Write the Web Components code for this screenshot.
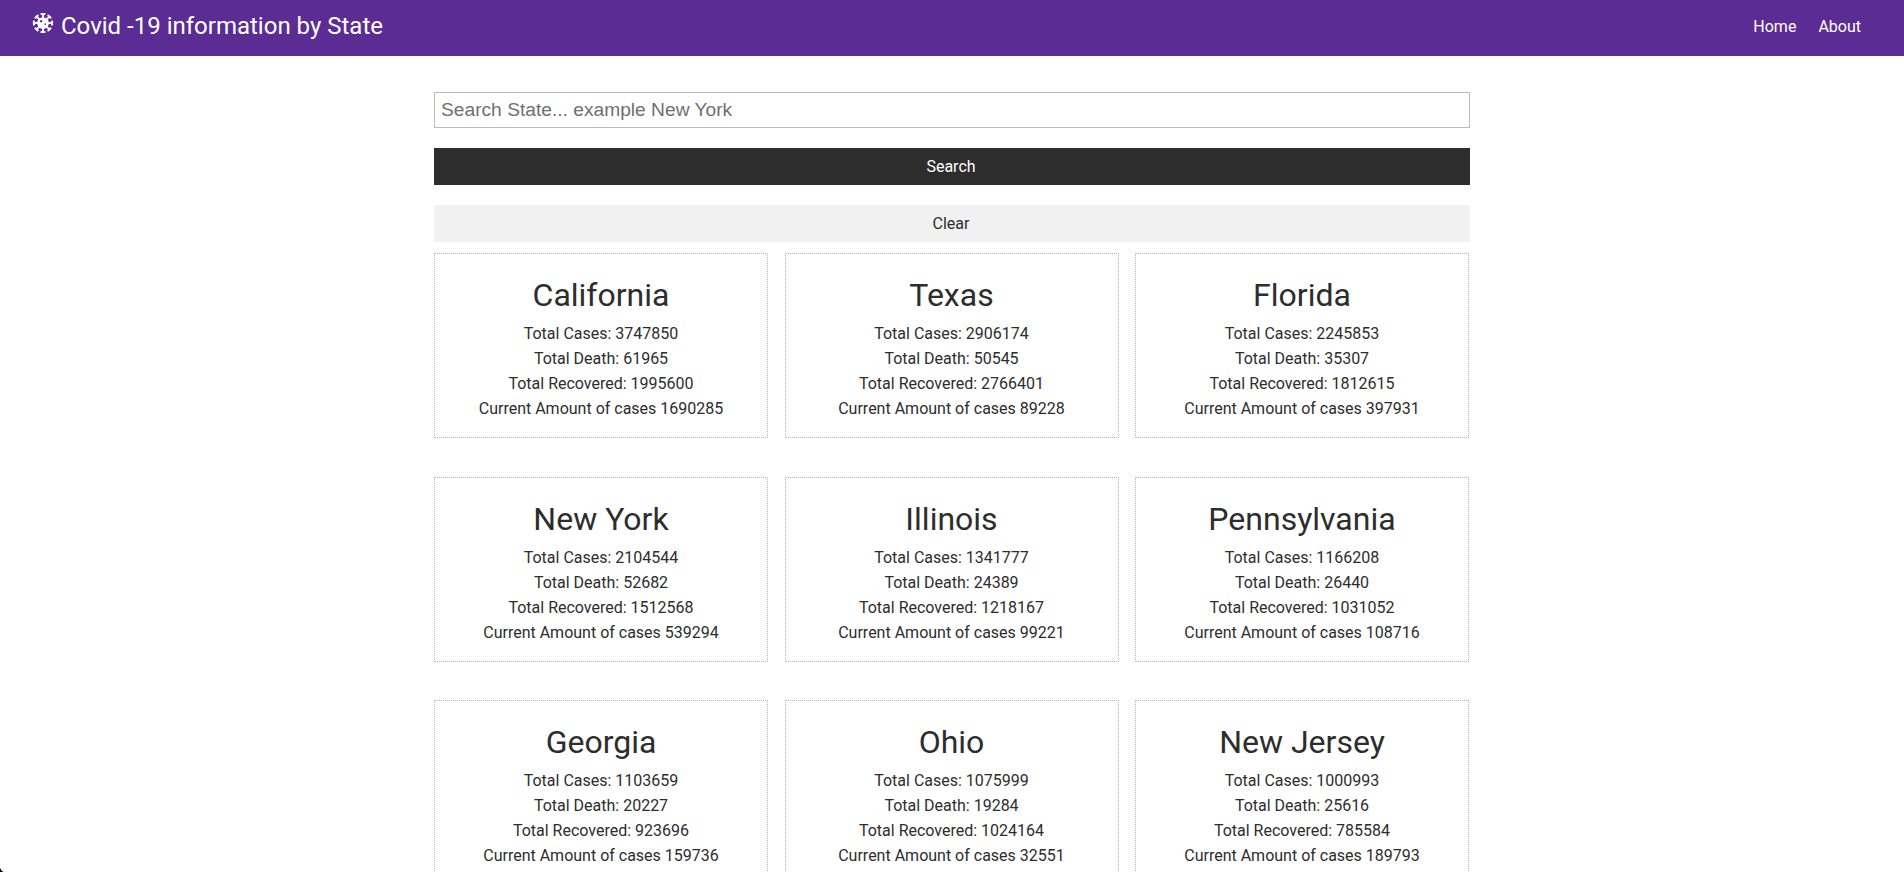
<!DOCTYPE html>
<html>
<head>
<meta charset="utf-8">
<title>Covid -19 information by State</title>
<style>
  html, body { margin: 0; padding: 0; height: 100%; overflow: hidden; background: #fff; }
  body { font-family: Roboto, "Liberation Sans", sans-serif; color: #2d2d2d; }
</style>
</head>
<body>
<app-navbar></app-navbar>
<main-content>
  <search-form></search-form>
  <state-grid id="grid"></state-grid>
</main-content>
<screen-corner></screen-corner>

<script>
class AppNavbar extends HTMLElement {
  constructor() {
    super();
    this.attachShadow({ mode: 'open' });
    const spokes = [0, 45, 90, 135, 180, 225, 270, 315].map(a => `
      <g transform="rotate(${a} 12 12)">
        <rect x="11" y="2" width="2" height="6" />
        <rect x="9.2" y="1" width="5.6" height="2.2" rx="1" />
      </g>`).join('');
    this.shadowRoot.innerHTML = `
      <style>
        :host { display: block; background: #5b2c94; color: #fff; height: 56px; }
        nav { display: flex; align-items: center; justify-content: space-between; height: 56px; padding: 0 43px 0 32px; }
        .brand { display: flex; align-items: flex-start; gap: 7px; font-size: 24px; line-height: 28px; margin-top: -5px; }
        svg { width: 22px; height: 22px; fill: #fff; margin-top: 0; }
        .links { display: flex; gap: 22px; font-size: 16px; line-height: 20px; margin-top: -2px; }
      </style>
      <nav>
        <div class="brand">
          <svg viewBox="0 0 24 24">
            ${spokes}
            <circle cx="12" cy="12" r="6.4" />
            <circle cx="10" cy="10" r="1.3" fill="#5b2c94" />
            <circle cx="14.4" cy="13.2" r="1" fill="#5b2c94" />
          </svg>
          <span>Covid -19 information by State</span>
        </div>
        <div class="links"><span>Home</span><span>About</span></div>
      </nav>`;
  }
}

class MainContent extends HTMLElement {
  constructor() {
    super();
    this.attachShadow({ mode: 'open' });
    this.shadowRoot.innerHTML = `
      <style>
        :host { display: block; width: 1036px; margin: 0 auto; padding-top: 36px; }
      </style>
      <slot></slot>`;
  }
}

class SearchForm extends HTMLElement {
  constructor() {
    super();
    this.attachShadow({ mode: 'open' });
    this.shadowRoot.innerHTML = `
      <style>
        :host { display: block; }
        input {
          display: block; box-sizing: border-box; width: 100%; height: 36px; padding: 0 6px;
          border: 1px solid #bbb; outline: none;
          font: 19.2px "Liberation Sans", Arial, sans-serif; color: #2d2d2d; background: #fff; border-radius: 0;
        }
        input::placeholder { color: #6f6f6f; opacity: 1; }
        button {
          display: block; box-sizing: border-box; width: 100%; height: 37px; margin-top: 20px; border: 0;
          font: 16px Roboto, sans-serif; cursor: pointer; padding: 0 2px 0 0;
        }
        .dark { background: #2d2d2d; color: #fff; }
        .light { background: #f1f1f1; color: #2d2d2d; }
      </style>
      <input type="text" placeholder="Search State... example New York">
      <button class="dark">Search</button>
      <button class="light">Clear</button>`;
  }
}

class StateGrid extends HTMLElement {
  constructor() {
    super();
    this.attachShadow({ mode: 'open' });
    this.shadowRoot.innerHTML = `
      <style>
        :host { display: grid; width: 1035px; grid-template-columns: repeat(3, 334px); column-gap: 16.5px; row-gap: 38.5px; margin-top: 11.25px; }
      </style>
      <slot></slot>`;
  }
}

class StateCard extends HTMLElement {
  static get observedAttributes() {
    return ['name', 'cases', 'death', 'recovered', 'current'];
  }

  constructor() {
    super();
    this.attachShadow({ mode: 'open' });
  }

  connectedCallback() {
    this.render();
  }

  attributeChangedCallback() {
    this.render();
  }

  render() {
    const get = k => this.getAttribute(k) || '';
    this.shadowRoot.innerHTML = `
      <style>
        :host { display: block; box-sizing: border-box; height: 185px; border: 1px dotted #b5b5b5; text-align: center; padding-top: 23px; }
        h2 { margin: 0 0 7px; font-size: 32px; line-height: 37px; font-weight: 400; color: #2d2d2d; }
        p { margin: 0; font-size: 16px; line-height: 25px; color: #2d2d2d; }
      </style>
      <h2>${get('name')}</h2>
      <p>Total Cases: ${get('cases')}</p>
      <p>Total Death: ${get('death')}</p>
      <p>Total Recovered: ${get('recovered')}</p>
      <p>Current Amount of cases ${get('current')}</p>`;
  }
}

// the dark bit of the display's rounded corner in the photo
class ScreenCorner extends HTMLElement {
  constructor() {
    super();
    this.attachShadow({ mode: 'open' });
    this.shadowRoot.innerHTML = `
      <style>
        :host { position: fixed; left: 0; bottom: 0; display: block; width: 4px; height: 4px; }
      </style>
      <svg width="4" height="4" viewBox="0 0 4 4" style="display:block"><path d="M0 0 L0 4 L4 4 Q1 3 0 0Z" fill="#000"/></svg>`;
  }
}

customElements.define('app-navbar', AppNavbar);
customElements.define('main-content', MainContent);
customElements.define('search-form', SearchForm);
customElements.define('state-grid', StateGrid);
customElements.define('state-card', StateCard);
customElements.define('screen-corner', ScreenCorner);

const states = [
  ['California', 3747850, 61965, 1995600, 1690285],
  ['Texas', 2906174, 50545, 2766401, 89228],
  ['Florida', 2245853, 35307, 1812615, 397931],
  ['New York', 2104544, 52682, 1512568, 539294],
  ['Illinois', 1341777, 24389, 1218167, 99221],
  ['Pennsylvania', 1166208, 26440, 1031052, 108716],
  ['Georgia', 1103659, 20227, 923696, 159736],
  ['Ohio', 1075999, 19284, 1024164, 32551],
  ['New Jersey', 1000993, 25616, 785584, 189793]
];

const grid = document.getElementById('grid');
states.forEach(s => {
  const card = document.createElement('state-card');
  card.setAttribute('name', s[0]);
  card.setAttribute('cases', s[1]);
  card.setAttribute('death', s[2]);
  card.setAttribute('recovered', s[3]);
  card.setAttribute('current', s[4]);
  grid.appendChild(card);
});
</script>
</body>
</html>
